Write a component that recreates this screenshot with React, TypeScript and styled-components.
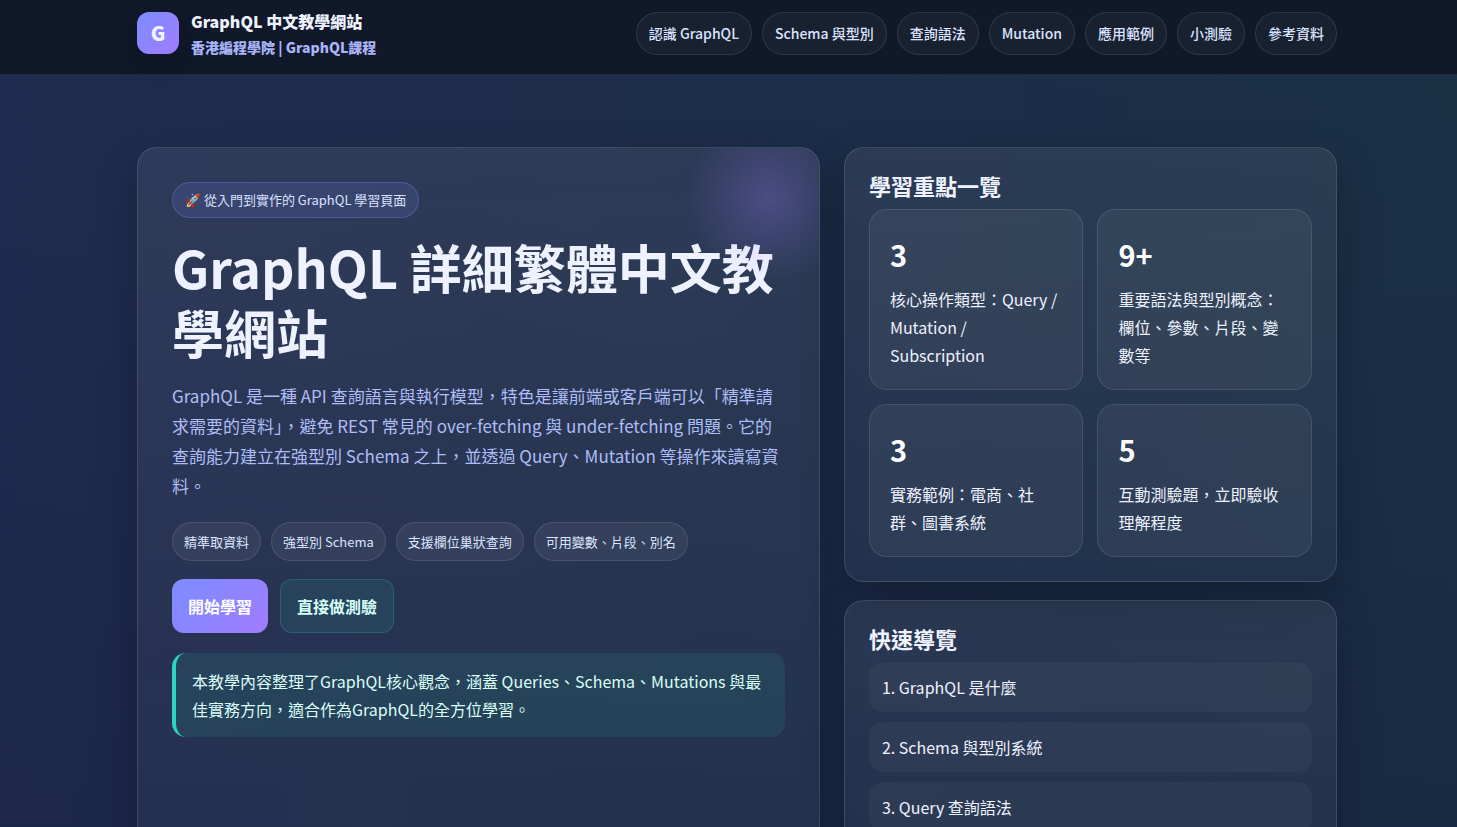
import React from "react";
import styled, { createGlobalStyle } from "styled-components";

const GlobalStyle = createGlobalStyle`
  *, *::before, *::after { box-sizing: border-box; }
  body {
    margin: 0;
    min-height: 100vh;
    color: #eef2ff;
    font-family: "Noto Sans CJK TC", "Noto Sans", sans-serif;
    font-size: 16px;
    line-height: 28px;
    background:
      linear-gradient(180deg, transparent, rgba(20, 28, 62, 0.35)),
      linear-gradient(90deg, #202d50 0%, #1e2e4b 40%, #1b2f48 75%, #1b3246 100%);
  }
  a { color: inherit; text-decoration: none; }
  h1, h2, p, ul, ol { margin: 0; padding: 0; }
  ul, ol { list-style: none; }
`;

const Page = styled.div`
  height: 100vh;
  overflow: hidden;
`;

const Header = styled.header`
  padding: 7px 0 15px 17px;
  background: #101829;
  border-bottom: 1px solid rgba(255, 255, 255, 0.08);
`;

const Container = styled.div`
  width: 100%;
  max-width: 1200px;
  margin: 0 auto;
`;

const HeaderRow = styled(Container)`
  display: flex;
  align-items: center;
  justify-content: space-between;
  gap: 16px;
`;

const Brand = styled.a`
  display: flex;
  align-items: center;
  gap: 12px;
  font-weight: 900;
`;

const Logo = styled.span`
  display: grid;
  place-items: center;
  width: 42px;
  height: 42px;
  border-radius: 12px;
  background: linear-gradient(135deg, #7c8cff, #a07cff);
  box-shadow: 0 12px 32px rgba(0, 0, 0, 0.2);
  font-size: 20px;
`;

const BrandText = styled.span`
  display: flex;
  flex-direction: column;
`;

const BrandSub = styled.span`
  color: #a9b4f8;
  font-size: 14px;
  line-height: 24px;
`;

const Nav = styled.nav`
  display: flex;
  gap: 10px;
`;

const NavLink = styled.a`
  padding: 8px 12px;
  border: 1px solid rgba(255, 255, 255, 0.1);
  border-radius: 999px;
  background: rgba(255, 255, 255, 0.04);
  color: #dbe4ff;
  font-size: 14px;
  font-weight: 500;
  line-height: 25px;
`;

const Main = styled.main`
  padding: 72px 0 48px 17px;
`;

const HeroGrid = styled(Container)`
  display: grid;
  grid-template-columns: 1.385fr 1fr;
  gap: 24px;
`;

const Card = styled.section`
  position: relative;
  overflow: hidden;
  border: 1px solid rgba(255, 255, 255, 0.12);
  border-radius: 20px;
  background: linear-gradient(180deg, rgba(255, 255, 255, 0.07), rgba(255, 255, 255, 0.04));
  box-shadow: 0 16px 40px rgba(0, 0, 0, 0.25);
`;

const HeroCard = styled(Card)`
  padding: 34px;

  &::after {
    content: "";
    position: absolute;
    top: -60px;
    right: -60px;
    width: 220px;
    height: 220px;
    background: radial-gradient(closest-side, rgba(160, 124, 255, 0.28), transparent 76%);
    pointer-events: none;
  }
`;

const SideCard = styled(Card)`
  padding: 24px;
`;

const Aside = styled.aside`
  display: grid;
  align-content: start;
  gap: 18px;
`;

const Badge = styled.span`
  display: inline-block;
  padding: 6px 12px;
  border: 1px solid rgba(124, 140, 255, 0.3);
  border-radius: 999px;
  background: rgba(124, 140, 255, 0.14);
  color: #dbe1ff;
  font-size: 13px;
  line-height: 22px;
`;

const Title = styled.h1`
  margin-top: 16px;
  font-size: 52px;
  font-weight: 700;
  line-height: 65px;
`;

const Lead = styled.p`
  margin-top: 17px;
  color: #aebdf5;
  font-size: 17px;
  line-height: 30px;
`;

const Chips = styled.ul`
  display: flex;
  flex-wrap: wrap;
  gap: 10px;
  margin-top: 21px;
`;

const Chip = styled.li`
  padding: 7px 11px;
  border: 1px solid rgba(255, 255, 255, 0.1);
  border-radius: 999px;
  background: rgba(255, 255, 255, 0.06);
  color: #dbe4ff;
  font-size: 13px;
  line-height: 23px;
`;

const Actions = styled.div`
  display: flex;
  gap: 12px;
  margin-top: 18px;
`;

const Button = styled.button<{ $primary?: boolean }>`
  padding: 12px 16px;
  border: ${(p) => (p.$primary ? "0" : "1px solid rgba(45, 212, 191, 0.2)")};
  border-radius: 12px;
  background: ${(p) =>
    p.$primary ? "linear-gradient(135deg, #7c8cff, #a07cff)" : "rgba(45, 212, 191, 0.1)"};
  color: ${(p) => (p.$primary ? "#ffffff" : "#d5fff7")};
  font: inherit;
  font-weight: 700;
  cursor: pointer;
`;

const Notice = styled.p`
  margin-top: 20px;
  padding: 14px 16px;
  border-left: 4px solid #2dd4bf;
  border-radius: 14px;
  background: rgba(45, 212, 191, 0.1);
  color: #d9fff8;
`;

const CardTitle = styled.h2`
  margin-bottom: 10px;
  font-size: 22px;
  font-weight: 700;
  line-height: 27px;
`;

const Stats = styled.ul`
  display: grid;
  grid-template-columns: 1fr 1fr;
  gap: 14px;
`;

const Stat = styled.li`
  padding: 20px;
  border: 1px solid rgba(255, 255, 255, 0.1);
  border-radius: 18px;
  background: rgba(255, 255, 255, 0.05);
`;

const StatValue = styled.strong`
  display: block;
  margin-bottom: 6px;
  color: #ffffff;
  font-size: 29px;
  line-height: 49px;
`;

const GuideList = styled.ol`
  display: grid;
  gap: 10px;
`;

const GuideLink = styled.a`
  display: block;
  padding: 11px 13px;
  border-radius: 14px;
  background: rgba(255, 255, 255, 0.04);
`;

const navItems = ["認識 GraphQL", "Schema 與型別", "查詢語法", "Mutation", "應用範例", "小測驗", "參考資料"];
const chips = ["精準取資料", "強型別 Schema", "支援欄位巢狀查詢", "可用變數、片段、別名"];
const stats = [
  { value: "3", label: "核心操作類型：Query / Mutation / Subscription" },
  { value: "9+", label: "重要語法與型別概念：欄位、參數、片段、變數等" },
  { value: "3", label: "實務範例：電商、社群、圖書系統" },
  { value: "5", label: "互動測驗題，立即驗收理解程度" },
];
const guide = ["1. GraphQL 是什麼", "2. Schema 與型別系統", "3. Query 查詢語法", "4. Mutation 與變數"];

export default function App() {
  return (
    <Page lang="zh-Hant">
      <GlobalStyle />
      <Header>
        <HeaderRow>
          <Brand href="#top">
            <Logo>G</Logo>
            <BrandText>
              <span>GraphQL 中文教學網站</span>
              <BrandSub>香港編程學院 | GraphQL課程</BrandSub>
            </BrandText>
          </Brand>
          <Nav>
            {navItems.map((item) => (
              <NavLink key={item} href="#top">{item}</NavLink>
            ))}
          </Nav>
        </HeaderRow>
      </Header>
      <Main id="top">
        <HeroGrid>
          <HeroCard>
            <Badge>🚀 從入門到實作的 GraphQL 學習頁面</Badge>
            <Title>GraphQL 詳細繁體中文教學網站</Title>
            <Lead>
              GraphQL 是一種 API 查詢語言與執行模型，特色是讓前端或客戶端可以「精準請求需要的資料」，避免 REST 常見的
              over-fetching 與 under-fetching 問題。它的查詢能力建立在強型別 Schema 之上，並透過 Query、Mutation
              等操作來讀寫資料。
            </Lead>
            <Chips>
              {chips.map((chip) => (
                <Chip key={chip}>{chip}</Chip>
              ))}
            </Chips>
            <Actions>
              <Button type="button" $primary>開始學習</Button>
              <Button type="button">直接做測驗</Button>
            </Actions>
            <Notice>
              本教學內容整理了GraphQL核心觀念，涵蓋 Queries、Schema、Mutations 與最佳實務方向，適合作為GraphQL的全方位學習。
            </Notice>
          </HeroCard>
          <Aside>
            <SideCard>
              <CardTitle>學習重點一覽</CardTitle>
              <Stats>
                {stats.map((stat) => (
                  <Stat key={stat.label}>
                    <StatValue>{stat.value}</StatValue>
                    {stat.label}
                  </Stat>
                ))}
              </Stats>
            </SideCard>
            <SideCard>
              <CardTitle>快速導覽</CardTitle>
              <GuideList>
                {guide.map((item) => (
                  <li key={item}>
                    <GuideLink href="#top">{item}</GuideLink>
                  </li>
                ))}
              </GuideList>
            </SideCard>
          </Aside>
        </HeroGrid>
      </Main>
    </Page>
  );
}
